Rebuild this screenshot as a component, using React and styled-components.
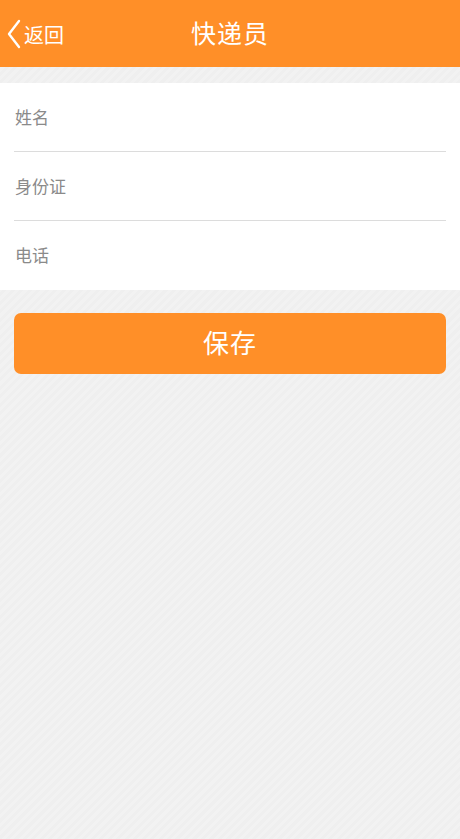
import React from "react";
import styled, { createGlobalStyle } from "styled-components";

const GlobalStyle = createGlobalStyle`
  html, body {
    margin: 0;
    padding: 0;
  }
  body {
    font-family: "Noto Sans CJK SC", "Liberation Sans", sans-serif;
  }
`;

const Page = styled.div`
  min-height: 839px;
  background-color: #f1f1f1;
  background-image: repeating-linear-gradient(
    135deg,
    #f2f2f2 0px,
    #f2f2f2 3px,
    #efefef 3px,
    #efefef 6px
  );
`;

const Header = styled.header`
  height: 67px;
  background: #ff8f28;
  display: grid;
  grid-template-columns: 1fr auto 1fr;
  align-items: center;
  color: #fff;
`;

const BackButton = styled.button`
  justify-self: start;
  display: flex;
  align-items: center;
  gap: 3px;
  background: none;
  border: 0;
  padding: 0 0 0 6px;
  color: #fff;
  font-family: inherit;
  font-size: 20px;
  line-height: 1;
  cursor: pointer;
`;

const BackLabel = styled.span`
  padding-top: 2px;
`;

const Title = styled.h1`
  margin: 0;
  font-size: 25px;
  font-weight: 400;
  letter-spacing: 1px;
  line-height: 1;
  padding-bottom: 2px;
`;

const Form = styled.div`
  margin-top: 16px;
  background: #fff;
`;

const Row = styled.label`
  display: flex;
  align-items: center;
  height: ${(p) => (p.$last ? 69 : 68)}px;
  margin: 0 14px;
  border-bottom: ${(p) => (p.$last ? "none" : "1px solid #dcdcdc")};
`;

const Input = styled.input`
  flex: 1;
  border: 0;
  outline: none;
  padding: 0 1px 2px;
  font-family: inherit;
  font-size: 17px;
  color: #333;
  background: transparent;

  &::placeholder {
    color: #8a8a8a;
  }
`;

const Actions = styled.div`
  padding: 23px 14px 0;
`;

const SaveButton = styled.button`
  width: 100%;
  height: 61px;
  border: 0;
  border-radius: 7px;
  background: #ff8f28;
  color: #fff;
  font-family: inherit;
  font-size: 26px;
  letter-spacing: 1px;
  padding: 0 0 5px;
  cursor: pointer;
`;

const Chevron = () => (
  <svg width="15" height="30" viewBox="0 0 15 30" fill="none">
    <path
      d="M13 2 L3 15 L13 28"
      stroke="#fff"
      strokeWidth="2.4"
      strokeLinecap="round"
      strokeLinejoin="round"
    />
  </svg>
);

const fields = ["姓名", "身份证", "电话"];

export default function App() {
  return (
    <Page>
      <GlobalStyle />
      <Header>
        <BackButton>
          <Chevron />
          <BackLabel>返回</BackLabel>
        </BackButton>
        <Title>快递员</Title>
        <span />
      </Header>
      <Form>
        {fields.map((f, i) => (
          <Row key={f} $last={i === fields.length - 1}>
            <Input placeholder={f} />
          </Row>
        ))}
      </Form>
      <Actions>
        <SaveButton>保存</SaveButton>
      </Actions>
    </Page>
  );
}
